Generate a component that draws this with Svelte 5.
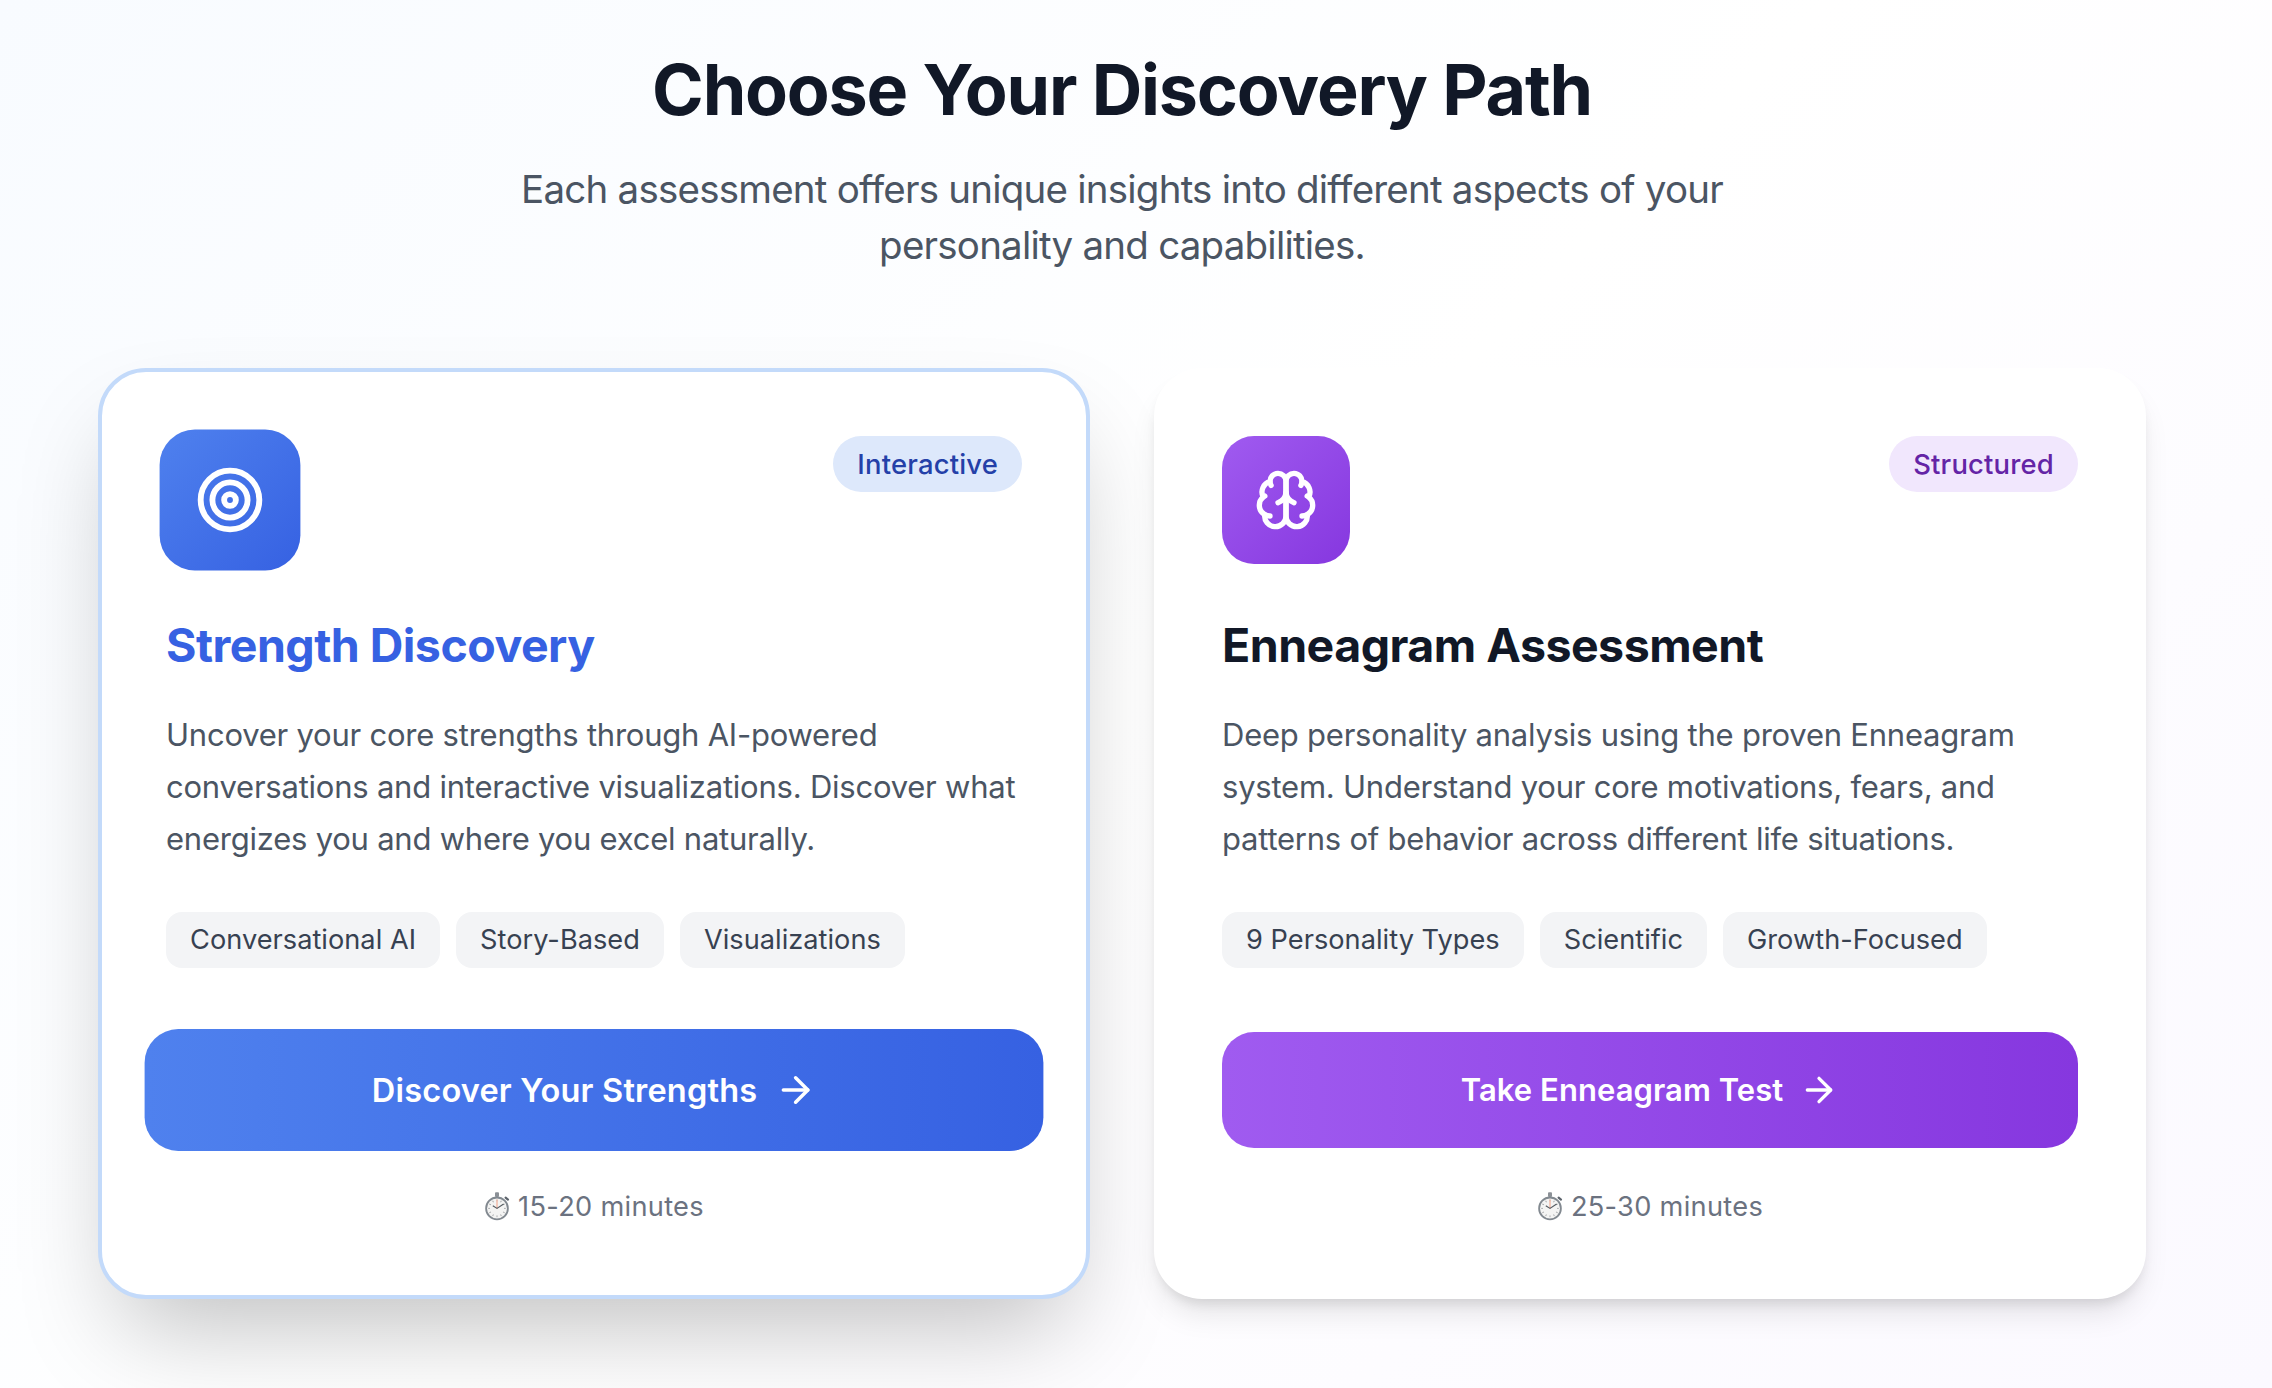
<script>
  const paths = [
    {
      theme: 'blue', active: true, icon: 'target', badge: 'Interactive', title: 'Strength Discovery',
      lines: ['Uncover your core strengths through AI-powered', 'conversations and interactive visualizations. Discover what', 'energizes you and where you excel naturally.'],
      tags: ['Conversational AI', 'Story-Based', 'Visualizations'],
      action: 'Discover Your Strengths', time: '15-20 minutes'
    },
    {
      theme: 'purple', active: false, icon: 'brain', badge: 'Structured', title: 'Enneagram Assessment',
      lines: ['Deep personality analysis using the proven Enneagram', 'system. Understand your core motivations, fears, and', 'patterns of behavior across different life situations.'],
      tags: ['9 Personality Types', 'Scientific', 'Growth-Focused'],
      action: 'Take Enneagram Test', time: '25-30 minutes'
    }
  ];
  const ticks = Array.from({ length: 12 }, (_, i) => i * 30);
</script>

<main class="page">
  <header class="intro">
    <h1>Choose Your Discovery Path</h1>
    <p>Each assessment offers unique insights into different aspects of your<br />personality and capabilities.</p>
  </header>

  <section class="cards">
    {#each paths as path}
      <article class="card {path.theme}" class:active={path.active}>
        <div class="top">
          <div class="tile">
            <svg class="icon" viewBox="0 0 24 24">
              {#if path.icon === 'target'}
                <circle cx="12" cy="12" r="10" />
                <circle cx="12" cy="12" r="6" />
                <circle cx="12" cy="12" r="2" />
              {:else}
                <path d="M12 5a3 3 0 1 0-5.997.125 4 4 0 0 0-2.526 5.77 4 4 0 0 0 .556 6.588A4 4 0 1 0 12 18Z" />
                <path d="M12 5a3 3 0 1 1 5.997.125 4 4 0 0 1 2.526 5.77 4 4 0 0 1-.556 6.588A4 4 0 1 1 12 18Z" />
                <path d="M15 13a4.5 4.5 0 0 1-3-4 4.5 4.5 0 0 1-3 4" />
                <path d="M17.599 6.5a3 3 0 0 0 .399-1.375" />
                <path d="M6.003 5.125A3 3 0 0 0 6.401 6.5" />
                <path d="M3.477 10.896a4 4 0 0 1 .585-.396" />
                <path d="M19.938 10.5a4 4 0 0 1 .585.396" />
                <path d="M6 18a4 4 0 0 1-1.967-.516" />
                <path d="M19.967 17.484A4 4 0 0 1 18 18" />
              {/if}
            </svg>
          </div>
          <span class="badge">{path.badge}</span>
        </div>

        <h2>{path.title}</h2>
        <p class="copy">
          {#each path.lines as line}<span>{line}</span><br />{/each}
        </p>

        <ul class="tags">
          {#each path.tags as tag}<li>{tag}</li>{/each}
        </ul>

        <button type="button">
          <span>{path.action}</span>
          <svg class="arrow" viewBox="0 0 24 24"><path d="M5 12h14" /><path d="m12 5 7 7-7 7" /></svg>
        </button>

        <div class="time">
          <svg class="watch" viewBox="0 0 26 30">
            <rect x="11" y="0.2" width="4" height="4.8" rx="1" fill="#8b9096" />
            <path d="M21.6 5.6l2.4 2" stroke="#5d646c" stroke-width="2.2" stroke-linecap="round" />
            <circle cx="13" cy="16.4" r="10.9" fill="#f4f4f3" stroke="#828990" stroke-width="1.8" />
            {#each ticks as angle}
              <path d="M13 7.6v1.8" transform="rotate({angle} 13 16.4)" stroke="#a4a6a9" stroke-width="0.9" />
            {/each}
            <path d="M13 16.4V7.4" stroke="#f2b8a4" stroke-width="1.4" />
            <path d="M8.8 13.8l4.2 2.6 6.6-4.4" fill="none" stroke="#555b61" stroke-width="1.2" />
          </svg>
          <span>{path.time}</span>
        </div>
      </article>
    {/each}
  </section>
</main>

<style>
  :global(body) { margin: 0; }
  .page {
    box-sizing: border-box;
    height: 1388px;
    overflow: hidden;
    padding: 50px 126px 0 98px;
    background: linear-gradient(135deg, #f8fbff 0%, #ffffff 50%, #fbf9ff 100%);
    font-family: Inter, "Liberation Sans", sans-serif;
  }
  h1, h2, p, ul { margin: 0; padding: 0; }
  .intro { height: 318px; text-align: center; }
  h1 { font-size: 70px; line-height: 80px; font-weight: 700; color: #111827; letter-spacing: -1.18px; }
  .intro p { margin-top: 31px; font-size: 38.5px; line-height: 56px; color: #4b5563; letter-spacing: -0.78px; }
  .cards { display: grid; grid-template-columns: 992px 992px; gap: 64px; }
  .card {
    position: relative;
    box-sizing: border-box;
    height: 931px;
    padding: 64px;
    border: 4px solid transparent;
    border-radius: 48px;
    background: #fff;
    box-shadow: 0 20px 30px -6px rgba(0, 0, 0, 0.1), 0 8px 12px -4px rgba(0, 0, 0, 0.1);
  }
  .card.active { border-color: #c3dafa; box-shadow: 0 50px 100px -24px rgba(0, 0, 0, 0.25); }
  .blue { --from: #4f81ee; --to: #3661e2; --soft: #dde8fb; --deep: #2440a8; }
  .purple { --from: #a05bf0; --to: #8637df; --soft: #f1e7fd; --deep: #6424a6; }
  .top { display: flex; justify-content: space-between; align-items: flex-start; margin-bottom: 49px; }
  .tile {
    display: flex; align-items: center; justify-content: center;
    width: 128px; height: 128px; border-radius: 32px;
    background: linear-gradient(135deg, var(--from), var(--to));
  }
  .active .tile { transform: scale(1.1); }
  .icon, .arrow { fill: none; stroke: #fff; stroke-width: 2; stroke-linecap: round; stroke-linejoin: round; }
  .icon { width: 64px; height: 64px; }
  .badge {
    padding: 8px 24px; border-radius: 28px; background: var(--soft); color: var(--deep);
    font-size: 27.4px; line-height: 40px; font-weight: 500; letter-spacing: 0.2px;
  }
  h2 { font-size: 46.5px; line-height: 64px; font-weight: 700; color: #111827; letter-spacing: -0.52px; white-space: nowrap; }
  .active h2 { color: #3661e2; }
  .copy { margin-top: 32px; font-size: 31px; line-height: 52px; color: #4b5563; white-space: nowrap; letter-spacing: -0.23px; }
  .tags { display: flex; gap: 16px; margin-top: 47px; list-style: none; }
  .tags li { padding: 8px 24px; border-radius: 16px; background: #f3f4f6; color: #374151; font-size: 27.2px; line-height: 40px; white-space: nowrap; letter-spacing: 0.02px; }
  button {
    display: flex; align-items: center; justify-content: center; gap: 16px;
    width: 100%; height: 116px; margin: 64px 0 0; padding: 0; border: 0; border-radius: 32px;
    background: linear-gradient(90deg, var(--from), var(--to));
    color: #fff; font: 600 31px/48px Inter, "Liberation Sans", sans-serif; letter-spacing: 0.06px;
  }
  .active button { transform: scale(1.05); letter-spacing: 0.16px; }
  .arrow { width: 40px; height: 40px; }
  .time { display: flex; align-items: center; justify-content: center; gap: 8px; margin-top: 39px; color: #6b7280; font-size: 27.2px; line-height: 40px; letter-spacing: 0.3px; }
  .watch { width: 26px; height: 30px; }
</style>
